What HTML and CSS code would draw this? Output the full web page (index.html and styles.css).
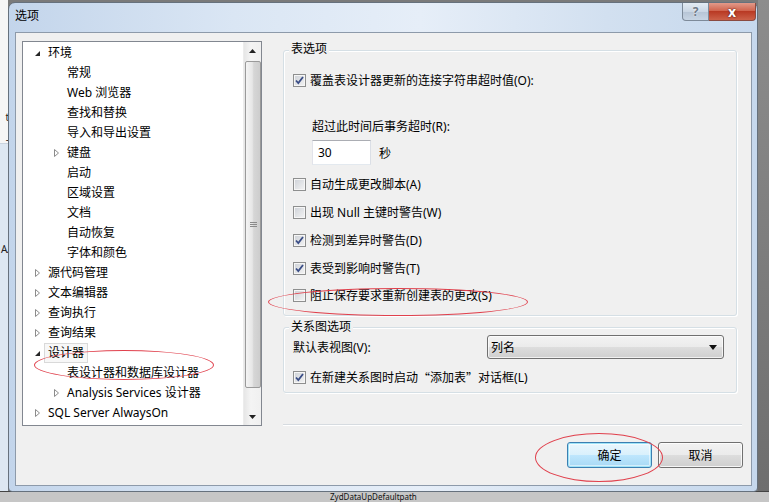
FILE: index.html
```html
<!DOCTYPE html>
<html lang="zh">
<head>
  <meta charset="UTF-8">
  <meta name="viewport" content="width=device-width, initial-scale=1.0">
  <title>选项</title>
  <link rel="stylesheet" href="styles.css">
</head>
<body>
<div class="screen">

  <!-- 窗口后面的桌面 -->
  <div class="desk-left">
    <div class="desk-doc">
      <p class="frag">t</p>
      <p class="frag">-</p>
      <p class="frag">d.</p>
    </div>
    <div class="desk-panel">
      <p class="frag">A.</p>
    </div>
  </div>
  <div class="desk-right"></div>
  <div class="desk-bottom"><span>ZydDataUpDefaultpath</span></div>

  <!-- 对话框 -->
  <div class="window">
    <div class="titlebar">
      <span class="title">选项</span>
      <div class="caption">
        <span class="cap-help">?</span>
        <span class="cap-close">x</span>
      </div>
    </div>

    <div class="client">
      <div class="tree">
        <ul class="tree-list">
          <li class="row"><svg class="tog" width="15" height="20" viewBox="0 0 15 20"><path d="M7 8V13H2Z" fill="#262626"/></svg>环境</li>
          <li class="row lv1"><span class="tog"></span>常规</li>
          <li class="row lv1"><span class="tog"></span>Web 浏览器</li>
          <li class="row lv1"><span class="tog"></span>查找和替换</li>
          <li class="row lv1"><span class="tog"></span>导入和导出设置</li>
          <li class="row lv1"><svg class="tog" width="15" height="20" viewBox="0 0 15 20"><path d="M2.5 6.5L6.5 10L2.5 13.5Z" fill="#fff" stroke="#8c8c8c"/></svg>键盘</li>
          <li class="row lv1"><span class="tog"></span>启动</li>
          <li class="row lv1"><span class="tog"></span>区域设置</li>
          <li class="row lv1"><span class="tog"></span>文档</li>
          <li class="row lv1"><span class="tog"></span>自动恢复</li>
          <li class="row lv1"><span class="tog"></span>字体和颜色</li>
          <li class="row"><svg class="tog" width="15" height="20" viewBox="0 0 15 20"><path d="M2.5 6.5L6.5 10L2.5 13.5Z" fill="#fff" stroke="#8c8c8c"/></svg>源代码管理</li>
          <li class="row"><svg class="tog" width="15" height="20" viewBox="0 0 15 20"><path d="M2.5 6.5L6.5 10L2.5 13.5Z" fill="#fff" stroke="#8c8c8c"/></svg>文本编辑器</li>
          <li class="row"><svg class="tog" width="15" height="20" viewBox="0 0 15 20"><path d="M2.5 6.5L6.5 10L2.5 13.5Z" fill="#fff" stroke="#8c8c8c"/></svg>查询执行</li>
          <li class="row"><svg class="tog" width="15" height="20" viewBox="0 0 15 20"><path d="M2.5 6.5L6.5 10L2.5 13.5Z" fill="#fff" stroke="#8c8c8c"/></svg>查询结果</li>
          <li class="row"><svg class="tog" width="15" height="20" viewBox="0 0 15 20"><path d="M7 8V13H2Z" fill="#262626"/></svg><span class="sel">设计器</span></li>
          <li class="row lv1"><span class="tog"></span>表设计器和数据库设计器</li>
          <li class="row lv1"><svg class="tog" width="15" height="20" viewBox="0 0 15 20"><path d="M2.5 6.5L6.5 10L2.5 13.5Z" fill="#fff" stroke="#8c8c8c"/></svg>Analysis Services 设计器</li>
          <li class="row"><svg class="tog" width="15" height="20" viewBox="0 0 15 20"><path d="M2.5 6.5L6.5 10L2.5 13.5Z" fill="#fff" stroke="#8c8c8c"/></svg>SQL Server AlwaysOn</li>
        </ul>

        <div class="scrollbar">
          <div class="sb-btn"><svg width="7" height="4" viewBox="0 0 7 4"><path d="M3.5 0L7 4H0Z" fill="#222"/></svg></div>
          <div class="sb-thumb"><svg width="7" height="6" viewBox="0 0 7 6"><path d="M0 .5H7M0 2.5H7M0 4.5H7" stroke="#8a8a8a"/></svg></div>
          <div class="sb-btn sb-down"><svg width="7" height="4" viewBox="0 0 7 4"><path d="M0 0H7L3.5 4Z" fill="#222"/></svg></div>
        </div>
      </div>

      <div class="pane">
        <div class="group group-table">
          <div class="group-title">表选项</div>
          <div class="check-row first"><span class="cb"><svg width="11" height="11" viewBox="0 0 11 11"><path d="M2 5.5L4.3 8L9 2" fill="none" stroke="#3a4d86" stroke-width="1.8"/></svg></span>覆盖表设计器更新的连接字符串超时值(O):</div>
          <div class="sub-label">超过此时间后事务超时(R):</div>
          <div class="timeout-row"><span class="textbox">30</span><span class="unit">秒</span></div>
          <div class="check-row gap9"><span class="cb"></span>自动生成更改脚本(A)</div>
          <div class="check-row gap8"><span class="cb"></span>出现 Null 主键时警告(W)</div>
          <div class="check-row gap8"><span class="cb"><svg width="11" height="11" viewBox="0 0 11 11"><path d="M2 5.5L4.3 8L9 2" fill="none" stroke="#3a4d86" stroke-width="1.8"/></svg></span>检测到差异时警告(D)</div>
          <div class="check-row gap8"><span class="cb"><svg width="11" height="11" viewBox="0 0 11 11"><path d="M2 5.5L4.3 8L9 2" fill="none" stroke="#3a4d86" stroke-width="1.8"/></svg></span>表受到影响时警告(T)</div>
          <div class="check-row gap7"><span class="cb"></span>阻止保存要求重新创建表的更改(S)</div>
        </div>

        <div class="group group-diagram">
          <div class="group-title">关系图选项</div>
          <div class="view-row">
            <span>默认表视图(V):</span>
            <div class="combo"><span>列名</span><svg width="8" height="5" viewBox="0 0 8 5"><path d="M0 0H8L4 5Z" fill="#111"/></svg></div>
          </div>
          <div class="check-row gap8"><span class="cb"><svg width="11" height="11" viewBox="0 0 11 11"><path d="M2 5.5L4.3 8L9 2" fill="none" stroke="#3a4d86" stroke-width="1.8"/></svg></span>在新建关系图时启动<span class="quote">“</span>添加表<span class="quote">”</span>对话框(L)</div>
        </div>

        <div class="separator"></div>

        <div class="buttons">
          <span class="btn btn-default">确定</span>
          <span class="btn">取消</span>
        </div>
      </div>
    </div>
  </div>

  <!-- 红色圈注 -->
  <div class="mark mark-tree"></div>
  <div class="mark mark-save"></div>
  <div class="mark mark-ok"></div>
</div>
</body>
</html>
```

FILE: styles.css
```css
body {
  margin: 0;
  font-family: "Noto Sans", "Noto Sans CJK SC", sans-serif;
  font-size: 12px;
  color: #000;
}

.screen {
  position: relative;
  width: 769px;
  height: 502px;
  overflow: hidden;
  background: #7a7a7a;
}

/* 桌面背景 */
.desk-left {
  position: absolute;
  left: 0;
  top: 0;
  width: 8px;
  height: 491px;
  overflow: hidden;
  display: flex;
  flex-direction: column;
  color: #222;
}

.desk-doc {
  height: 143px;
  padding-top: 107px;
  box-sizing: border-box;
  background: #f6f6f6;
}

.desk-panel {
  flex: 1;
  padding-top: 95px;
  background: #dde7f2;
  border-top: 1px solid #c9d3de;
}

.frag {
  margin: 0 0 2px;
  height: 20px;
  line-height: 20px;
  font-size: 10px;
  letter-spacing: -1px;
  text-align: right;
  white-space: nowrap;
}

.desk-right {
  position: absolute;
  right: 0;
  top: 0;
  width: 11px;
  height: 491px;
  background: linear-gradient(to bottom, #8d8d8d, #6e6e6e);
}

.desk-bottom {
  position: absolute;
  left: 0;
  bottom: 0;
  width: 100%;
  height: 11px;
  box-sizing: border-box;
  border-top: 1px solid #444;
  background: #c6c6c6;
  padding-left: 330px;
  line-height: 10px;
  color: #111;
  font-size: 8px;
}

/* 窗口 */
.window {
  position: absolute;
  left: 8px;
  top: 2px;
  width: 750px;
  height: 490px;
  box-sizing: border-box;
  border: 1px solid #66717d;
  border-radius: 7px 7px 4px 4px;
  background: linear-gradient(to right, #c3d5eb 0%, #dae6f4 30%, #e6eef8 55%, #d2e0f0 80%, #c6d8ed 100%);
  padding: 0 5px 5px 6px;
  display: flex;
  flex-direction: column;
}

.titlebar {
  position: relative;
  height: 29px;
  flex: none;
}

.title {
  display: block;
  margin-top: 3px;
  line-height: 20px;
}

.caption {
  position: absolute;
  top: 0;
  right: -4px;
  display: flex;
}

.cap-help,
.cap-close {
  height: 18px;
  box-sizing: border-box;
  display: flex;
  align-items: center;
  justify-content: center;
  font-weight: bold;
  color: #fff;
}

.cap-help {
  width: 27px;
  border: 1px solid #7d8a99;
  border-top: none;
  border-radius: 0 0 0 4px;
  background: linear-gradient(to bottom, #e3ebf4 0%, #cad6e4 50%, #b6c4d5 51%, #c8d5e4 100%);
  color: #6f7b88;
  font-size: 12px;
  text-shadow: 0 0 2px #fff;
}

.cap-close {
  width: 47px;
  border: 1px solid #8a4a40;
  border-top: none;
  border-left: none;
  border-radius: 0 0 4px 0;
  background: linear-gradient(to bottom, #e29a8a 0%, #d0654f 45%, #b93a24 50%, #cc6149 100%);
  font-size: 14px;
  line-height: 16px;
  text-shadow: 0 0 2px #5a1a10, 0 0 1px #5a1a10;
}

.client {
  flex: 1;
  border: 1px solid #8d9aaa;
  background: #f0f0f0;
  padding: 8px 0 0 6px;
  display: flex;
  gap: 21px;
}

/* 左侧树 */
.tree {
  width: 240px;
  height: 385px;
  box-sizing: border-box;
  border: 1px solid #828790;
  background: #fff;
  display: flex;
}

.tree-list {
  flex: 1;
  list-style: none;
  margin: 0;
  padding: 1px 0 0;
}

.row {
  height: 20px;
  line-height: 20px;
  padding-left: 10px;
  display: flex;
  white-space: nowrap;
}

.row.lv1 {
  padding-left: 29px;
}

.tog {
  display: block;
  width: 15px;
  height: 20px;
  flex: none;
}

.sel {
  margin-left: -4px;
  padding: 0 3px;
  height: 18px;
  line-height: 18px;
  border: 1px solid #d9d9d9;
  background: #f7f7f7;
}

.scrollbar {
  width: 17px;
  flex: none;
  display: flex;
  flex-direction: column;
  background: linear-gradient(to right, #e6e6e6, #f4f4f4 40%, #f0f0f0);
  border-left: 1px solid #ececec;
}

.sb-btn {
  height: 17px;
  display: flex;
  align-items: center;
  justify-content: center;
}

.sb-down {
  margin-top: auto;
}

.sb-thumb {
  height: 327px;
  margin: 2px 0 0 1px;
  box-sizing: border-box;
  border: 1px solid #9a9a9a;
  border-radius: 2px;
  background: linear-gradient(to right, #f4f4f4, #e6e6e6 45%, #d6d6d6 55%, #cdcdcd);
  display: flex;
  align-items: center;
  justify-content: center;
}

/* 右侧选项 */
.pane {
  width: 460px;
  display: flex;
  flex-direction: column;
}

.group {
  width: 454px;
  box-sizing: border-box;
  border: 1px solid #d5dfe5;
  border-radius: 3px;
  box-shadow: inset 1px 1px 0 #fff, 1px 1px 0 #fff;
  padding-left: 9px;
}

.group-table {
  height: 266px;
  margin-top: 9px;
}

.group-diagram {
  height: 66px;
  margin-top: 11px;
}

.group-title {
  width: fit-content;
  height: 16px;
  line-height: 16px;
  margin: -10px 0 0 -4px;
  padding: 0 2px;
  background: #f0f0f0;
}

.group-diagram .group-title {
  margin-top: -9px;
}

.check-row {
  height: 20px;
  display: flex;
  align-items: center;
  white-space: nowrap;
}

.check-row.first { margin-top: 13px; }
.check-row.gap9 { margin-top: 9px; }
.check-row.gap8 { margin-top: 8px; }
.check-row.gap7 { margin-top: 7px; }

.quote {
  display: inline-block;
  width: 12px;
  text-align: center;
  font-family: "Noto Sans CJK SC", sans-serif;
}

.cb {
  width: 13px;
  height: 13px;
  flex: none;
  box-sizing: border-box;
  margin-right: 4px;
  border: 1px solid #8e8f8f;
  background: linear-gradient(135deg, #cdd1d7, #f4f4f4);
  box-shadow: inset 0 0 0 1px #f6f6f6;
  display: flex;
  align-items: center;
  justify-content: center;
}

.sub-label {
  margin-top: 27px;
  padding-left: 19px;
  height: 20px;
  line-height: 20px;
}

.timeout-row {
  margin-top: 3px;
  padding-left: 19px;
  height: 25px;
  display: flex;
  align-items: center;
}

.textbox {
  width: 59px;
  height: 25px;
  box-sizing: border-box;
  border: 1px solid;
  border-color: #abadb3 #dbdfe6 #e3e9ef #e2e3ea;
  background: #fff;
  padding-left: 5px;
  line-height: 23px;
}

.unit {
  margin-left: 8px;
}

.view-row {
  height: 24px;
  padding-right: 12px;
  display: flex;
  align-items: center;
  justify-content: space-between;
}

.combo {
  width: 237px;
  height: 24px;
  box-sizing: border-box;
  border: 1px solid #707070;
  border-radius: 3px;
  background: linear-gradient(to bottom, #f3f3f3 0%, #ebebeb 50%, #dddddd 51%, #cfcfcf 100%);
  box-shadow: inset 0 0 0 1px rgba(255, 255, 255, 0.7);
  padding: 0 6px 0 3px;
  display: flex;
  align-items: center;
  justify-content: space-between;
}

.separator {
  width: 459px;
  margin-top: 31px;
  height: 1px;
  background: #d6dbe0;
  border-bottom: 1px solid #fff;
}

.buttons {
  margin-top: 16px;
  display: flex;
  justify-content: flex-end;
  gap: 6px;
}

.btn {
  width: 85px;
  height: 26px;
  box-sizing: border-box;
  border: 1px solid #707070;
  border-radius: 3px;
  background: linear-gradient(to bottom, #f2f2f2 0%, #ebebeb 50%, #dddddd 51%, #cfcfcf 100%);
  box-shadow: inset 0 0 0 1px rgba(255, 255, 255, 0.8);
  display: flex;
  align-items: center;
  justify-content: center;
}

.btn-default {
  border-color: #3c7fb1;
  background: linear-gradient(to bottom, #eaf6fd 0%, #d9f0fc 50%, #bee6fd 51%, #a7d9f5 100%);
  box-shadow: inset 0 0 0 1px #9ee3f8, inset 0 0 0 2px rgba(255, 255, 255, 0.5);
}

/* 红色圈注 */
.mark {
  position: absolute;
  border: 1px solid #e0414d;
  border-radius: 50%;
}

.mark-tree {
  left: 34px;
  top: 350px;
  width: 178px;
  height: 28px;
}

.mark-save {
  left: 268px;
  top: 288px;
  width: 258px;
  height: 26px;
}

.mark-ok {
  left: 535px;
  top: 433px;
  width: 126px;
  height: 47px;
}
```
